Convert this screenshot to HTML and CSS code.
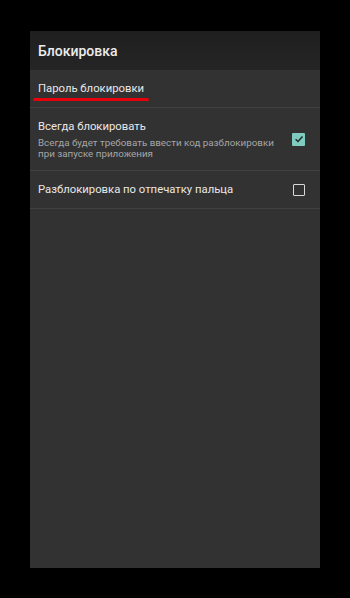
FILE: index.html
```html
<!DOCTYPE html>
<html>
<head>
  <title>Блокировка</title>
  <link rel="stylesheet" href="styles.css">
</head>
<body>
  <div class="screen">
    <div class="toolbar">
      <h1>Блокировка</h1>
    </div>

    <div class="pref pref-link">
      <span class="pref-title">Пароль блокировки</span>
      <span class="marker"></span>
    </div>

    <div class="pref">
      <div class="pref-text">
        <span class="pref-title">Всегда блокировать</span>
        <span class="pref-summary">Всегда будет требовать ввести код разблокировки<br>при запуске приложения</span>
      </div>
      <span class="check checked">
        <svg viewBox="0 0 12 12" width="12" height="12"><path d="M2.6 6.2 L5 8.5 L9.5 3.6" fill="none" stroke="#1f2a28" stroke-width="1.5"/></svg>
      </span>
    </div>

    <div class="pref">
      <div class="pref-text">
        <span class="pref-title">Разблокировка по отпечатку пальца</span>
      </div>
      <span class="check"></span>
    </div>
  </div>
</body>
</html>
```

FILE: styles.css
```css
body {
  margin: 0;
  background: #000;
  font-family: Roboto, "Noto Sans", sans-serif;
  color: #e6e6e6;
}

.screen {
  margin: 31px 0 0 30px;
  width: 290px;
  height: 537px;
  background: #323232;
}

.toolbar {
  height: 39px;
  display: flex;
  align-items: center;
  padding-left: 8px;
  background: linear-gradient(#1f1f1f, #252525);
}

.toolbar h1 {
  margin: 0;
  font-size: 14px;
  font-weight: 500;
  color: #ececec;
}

.pref {
  display: flex;
  align-items: center;
  justify-content: space-between;
  padding: 0 15px 0 8px;
  border-bottom: 1px solid #414141;
}

.pref-link {
  position: relative;
  height: 37px;
}

.pref-text {
  display: flex;
  flex-direction: column;
  padding: 12px 0 11px;
}

.pref-title {
  font-size: 11.3px;
  line-height: 14px;
  color: #e8e8e8;
}

.pref-summary {
  margin-top: 3px;
  font-size: 9.8px;
  line-height: 11px;
  color: #a6a6a6;
}

.marker {
  position: absolute;
  left: 3px;
  top: 28px;
  width: 116px;
  height: 3px;
  border-radius: 2px;
  background: #e8000a;
}

.check {
  width: 10px;
  height: 10px;
  border: 1.5px solid #d8d8d8;
  border-radius: 1px;
  display: flex;
  align-items: center;
  justify-content: center;
}

.check.checked {
  width: 13px;
  height: 13px;
  border: none;
  background: #7fcbbf;
}
```
